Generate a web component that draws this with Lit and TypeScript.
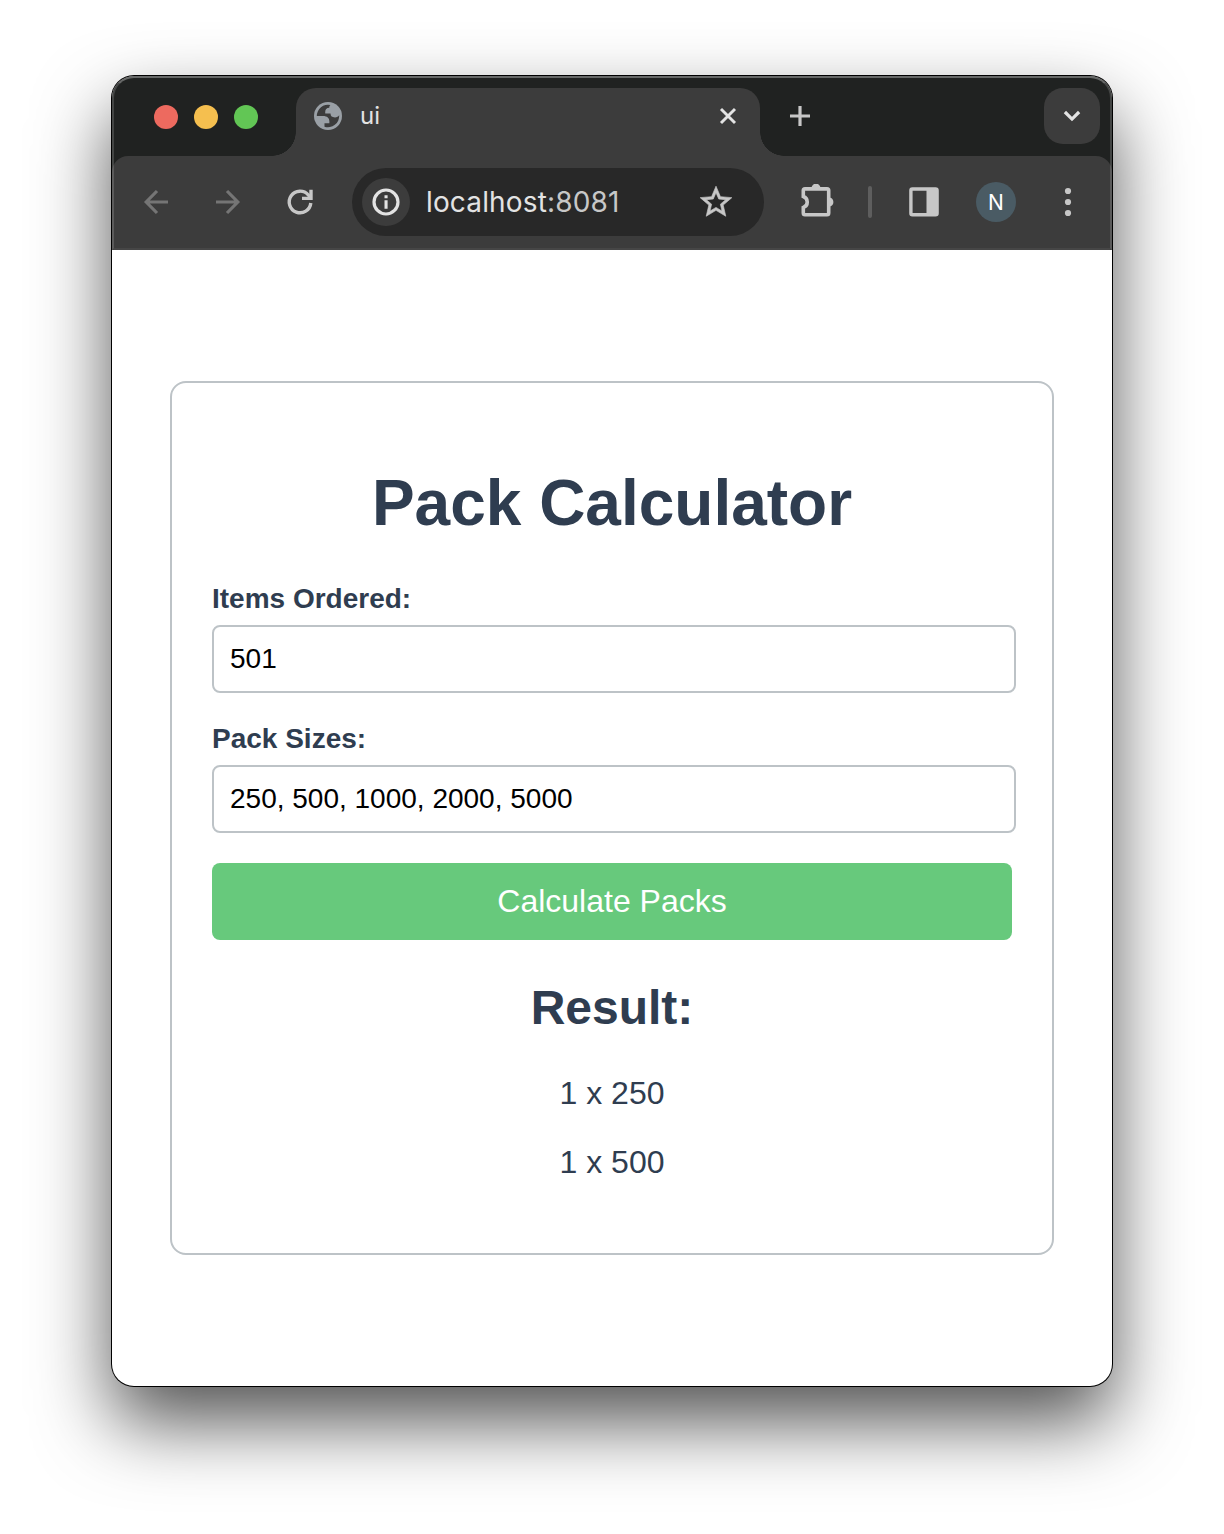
import { LitElement, html, css } from "lit";
import { customElement, state } from "lit/decorators.js";

@customElement("browser-chrome")
class BrowserChrome extends LitElement {
  static styles = css`
    :host {
      display: block;
      position: relative;
      height: 174px;
      background: #202221;
      border-radius: 22px 22px 0 0;
      overflow: hidden;
      font-family: Inter, sans-serif;
    }
    svg { display: block; flex: none; }
    .edge {
      position: absolute;
      inset: 0;
      border-radius: 22px 22px 0 0;
      border: 2px solid rgba(255, 255, 255, 0.16);
      border-top-color: rgba(255, 255, 255, 0.32);
      border-bottom-color: rgba(255, 255, 255, 0.06);
      pointer-events: none;
    }
    .strip { height: 80px; display: flex; box-sizing: border-box; padding: 12px 12px 0 42px; }
    .lights { display: flex; gap: 16px; padding-top: 17px; width: 142px; }
    .light { width: 24px; height: 24px; border-radius: 50%; }
    .red { background: #ed6a5f; }
    .amber { background: #f5bf4f; }
    .green { background: #62c655; }
    .tab {
      position: relative;
      width: 464px;
      height: 68px;
      box-sizing: border-box;
      padding: 0 20px 12px 18px;
      display: flex;
      align-items: center;
      background: #3c3c3c;
      border-radius: 20px 20px 0 0;
      color: #e3e3e3;
    }
    .tab::before, .tab::after {
      content: "";
      position: absolute;
      bottom: 0;
      width: 24px;
      height: 24px;
    }
    .tab::before { left: -24px; background: radial-gradient(circle at 0 0, transparent 23.5px, #3c3c3c 24px); }
    .tab::after { right: -24px; background: radial-gradient(circle at 100% 0, transparent 23.5px, #3c3c3c 24px); }
    .title { flex: 1; padding-left: 18px; font-size: 24px; line-height: 28px; }
    .plus { margin: 16px 0 0 28px; }
    .search {
      margin-left: auto;
      width: 56px;
      height: 56px;
      border-radius: 19px;
      background: #3c3c3c;
      display: flex;
      align-items: center;
      justify-content: center;
    }
    .toolbar {
      height: 94px;
      box-sizing: border-box;
      display: flex;
      align-items: center;
      padding: 0 22px 2px 28px;
      background: #3c3c3c;
      border-radius: 16px 16px 0 0;
    }
    .fwd { margin-left: 40px; }
    .reload { margin-left: 40px; }
    .omnibox {
      width: 412px;
      height: 68px;
      box-sizing: border-box;
      margin-left: 36px;
      padding: 0 29px 0 10px;
      border-radius: 34px;
      background: #282828;
      display: flex;
      align-items: center;
    }
    .info { width: 48px; height: 48px; border-radius: 50%; background: #3c3c3c; }
    .url { flex: 1; margin-left: 16px; font-size: 28px; line-height: 32px; letter-spacing: 0.15px; color: #e3e3e3; }
    .port { color: #c7c7c7; }
    .puzzle { margin-left: 36px; }
    .sep { width: 4px; height: 32px; border-radius: 2px; background: #5e5e5e; margin-left: 32px; }
    .panel { margin-left: 36px; }
    .avatar {
      width: 40px;
      height: 40px;
      margin-left: 36px;
      border-radius: 50%;
      background: #4a5b64;
      color: #fff;
      font-size: 21px;
      line-height: 41px;
      text-align: center;
    }
    .dots { margin-left: 32px; }
  `;

  render() {
    return html`
      <div class="strip">
        <div class="lights">
          <span class="light red"></span><span class="light amber"></span><span class="light green"></span>
        </div>
        <div class="tab">
          <svg width="28" height="28" viewBox="2 2 20 20">
            <circle cx="12" cy="12" r="10" fill="#9aa0a6" />
            <path fill="#3c3c3c" d="M4 12h4.400c3.407.022 4.922 1.730 4.543 5.127H9.488v2.470a8.004 8.004 0 0 0 10.498-8.080C19.327 12.507 18.332 13 17 13c-2.137 0-3.206-.916-3.206-2.750h-3.748c-.274-2.728.683-4.092 2.870-4.092 0-.975.327-1.597.811-1.970A8.004 8.004 0 0 0 4 12z" />
          </svg>
          <span class="title">ui</span>
          <svg width="24" height="24" viewBox="0 0 24 24" fill="none" stroke="#e3e3e3" stroke-width="2.900"><path d="M5 5l14 14M19 5L5 19" /></svg>
        </div>
        <svg class="plus" width="24" height="24" viewBox="0 0 24 24" fill="none" stroke="#c7c7c7" stroke-width="3.200"><path d="M12 2v20M2 12h20" /></svg>
        <div class="search">
          <svg width="24" height="24" viewBox="0 0 24 24" fill="none" stroke="#e3e3e3" stroke-width="3.200"><path d="M4.900 8L12 15.100l7.100-7.100" /></svg>
        </div>
      </div>
      <div class="toolbar">
        <svg width="32" height="32" viewBox="0 0 32 32" fill="none" stroke="#757575" stroke-width="3.200"><path d="M28 16H6.500M17 5L6.200 16l10.800 11" /></svg>
        <svg class="fwd" width="32" height="32" viewBox="0 0 32 32" fill="none" stroke="#757575" stroke-width="3.200"><path d="M4 16h21.500M15 5l10.800 11-10.800 11" /></svg>
        <svg class="reload" width="32" height="32" viewBox="0 0 32 32" fill="none" stroke="#c7c7c7" stroke-width="3.400"><path d="M26.800 17A10.800 10.800 0 1 1 24.300 9L26.500 11.500" /><path d="M27 3.700v8.700h-9" /></svg>
        <div class="omnibox">
          <svg class="info" viewBox="0 0 48 48"><circle cx="24" cy="24" r="12" fill="none" stroke="#e3e3e3" stroke-width="3.200" /><path fill="#e3e3e3" d="M22.500 17.200h3.100v3h-3.100zM22.500 22.300h3.100v8.500h-3.100z" /></svg>
          <span class="url">localhost<span class="port">:8081</span></span>
          <svg width="38" height="38" viewBox="0 0 24 24" fill="#c7c7c7" stroke="#c7c7c7" stroke-width="0.400"><path d="M22 9.240l-7.190-.620L12 2 9.190 8.630 2 9.240l5.460 4.730L5.820 21 12 17.270 18.180 21l-1.630-7.030L22 9.240zM12 15.400l-3.760 2.270 1-4.280-3.320-2.880 4.380-.380L12 6.100l1.710 4.040 4.380.380-3.320 2.880 1 4.280L12 15.400z" /></svg>
        </div>
        <svg class="puzzle" width="36" height="36" viewBox="0 0 36 36"><path d="M5 4.900h22q1.700 0 1.700 1.700v22.400q0 1.700-1.700 1.700H5q-1.700 0-1.700-1.700v-5.500a5.800 5.800 0 0 0 0-11v-5.900q0-1.700 1.700-1.700z" fill="none" stroke="#c7c7c7" stroke-width="3.600" /><path fill="#c7c7c7" d="M11.500 4a4.500 4.400 0 0 1 9 0zM29.500 13.400a4.900 4.700 0 0 1 0 9.200z" /></svg>
        <span class="sep"></span>
        <svg class="panel" width="32" height="32" viewBox="0 0 32 32"><rect x="2.900" y="3" width="26.200" height="25.700" rx="1.500" fill="none" stroke="#c7c7c7" stroke-width="3.400" /><path fill="#c7c7c7" d="M18.500 2.500H29v27H18.500z" /></svg>
        <span class="avatar">N</span>
        <svg class="dots" width="40" height="32" viewBox="0 0 40 32" fill="#c7c7c7"><circle cx="20" cy="5" r="3.100" /><circle cx="20" cy="16" r="3.100" /><circle cx="20" cy="27" r="3.100" /></svg>
      </div>
      <div class="edge"></div>
    `;
  }
}

@customElement("pack-calculator")
class PackCalculator extends LitElement {
  static styles = css`
    :host { display: block; font-family: "Liberation Sans", Arial, sans-serif; color: #2f3d50; }
    .card {
      box-sizing: border-box;
      width: 884px;
      height: 874px;
      border: 2px solid #bdc3c7;
      border-radius: 16px;
      padding: 83px 40px 0;
      text-align: center;
    }
    .heading { margin: 0 0 43px; font-size: 64px; line-height: 74px; font-weight: 700; }
    .field { text-align: left; margin-bottom: 30px; }
    .label { display: block; font-size: 28px; line-height: 32px; font-weight: 700; margin-bottom: 10px; }
    .input {
      display: block;
      box-sizing: border-box;
      width: 804px;
      height: 68px;
      margin: 0;
      padding: 0 16px 1px;
      border: 2px solid #bdc3c7;
      border-radius: 8px;
      background: #fff;
      color: #000;
      font: 28px "Liberation Sans", Arial, sans-serif;
    }
    .button {
      display: block;
      width: 800px;
      height: 77px;
      border: 0;
      border-radius: 8px;
      padding: 0;
      background: #67c97c;
      color: #fff;
      font: 32px "Liberation Sans", Arial, sans-serif;
    }
    .subheading { margin: 41px 0 40px; font-size: 48px; line-height: 54px; font-weight: 700; }
    .row { margin: 0 0 32px; font-size: 32px; line-height: 37px; }
  `;

  @state() private items = "501";
  @state() private sizes = "250, 500, 1000, 2000, 5000";
  @state() private result = ["1 x 250", "1 x 500"];

  render() {
    return html`
      <div class="card">
        <h1 class="heading">Pack Calculator</h1>
        <div class="field">
          <label class="label" for="items">Items Ordered:</label>
          <input class="input" id="items" .value=${this.items} />
        </div>
        <div class="field">
          <label class="label" for="sizes">Pack Sizes:</label>
          <input class="input" id="sizes" .value=${this.sizes} />
        </div>
        <button class="button">Calculate Packs</button>
        <h2 class="subheading">Result:</h2>
        ${this.result.map((line) => html`<p class="row">${line}</p>`)}
      </div>
    `;
  }
}

@customElement("app-root")
class AppRoot extends LitElement {
  static styles = css`
    :host {
      display: block;
      box-sizing: border-box;
      width: 1224px;
      height: 1534px;
      padding: 76px 112px 0;
      background: #fff;
      overflow: hidden;
    }
    .window {
      height: 1310px;
      border-radius: 22px;
      background: #fff;
      box-shadow: 0 0 0 1px #000, 0 36px 76px rgba(0, 0, 0, 0.68);
    }
    .page { padding: 131px 58px 0; }
  `;

  render() {
    return html`
      <div class="window">
        <browser-chrome></browser-chrome>
        <div class="page"><pack-calculator></pack-calculator></div>
      </div>
    `;
  }
}
